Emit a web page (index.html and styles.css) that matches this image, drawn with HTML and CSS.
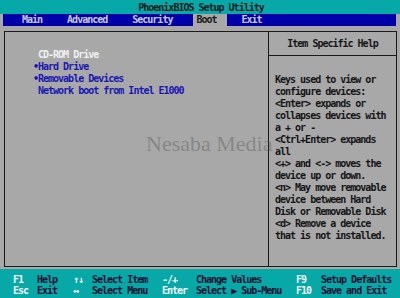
FILE: index.html
```html
<!DOCTYPE html>
<html>
<head>
<meta charset="utf-8">
<link rel="stylesheet" href="styles.css">
</head>
<body>
<div class="screen">
  <div class="titlebar">PhoenixBIOS Setup Utility</div>
  <nav class="menubar">
    <span class="tab tab-main">Main</span>
    <span class="tab tab-adv">Advanced</span>
    <span class="tab tab-sec">Security</span>
    <span class="tab tab-boot active">Boot</span>
    <span class="tab tab-exit">Exit</span>
  </nav>
  <main class="body">
    <div class="frame">
      <section class="list">
        <div class="item selected"><span class="mark"></span>CD-ROM Drive</div>
        <div class="item"><span class="mark">•</span>Hard Drive</div>
        <div class="item"><span class="mark">•</span>Removable Devices</div>
        <div class="item"><span class="mark"></span>Network boot from Intel E1000</div>
      </section>
      <aside class="help">
        <div class="help-head">Item Specific Help</div>
        <div class="help-text">
          <div>Keys used to view or</div>
          <div>configure devices:</div>
          <div>&lt;Enter&gt; expands or</div>
          <div>collapses devices with</div>
          <div>a + or -</div>
          <div>&lt;Ctrl+Enter&gt; expands</div>
          <div>all</div>
          <div>&lt;+&gt; and &lt;-&gt; moves the</div>
          <div>device up or down.</div>
          <div>&lt;n&gt; May move removable</div>
          <div>device between Hard</div>
          <div>Disk or Removable Disk</div>
          <div>&lt;d&gt; Remove a device</div>
          <div>that is not installed.</div>
        </div>
      </aside>
      <div class="watermark">Nesaba Media</div>
    </div>
  </main>
  <footer class="keys">
    <span class="k">F1</span><span class="d">Help</span><span class="k">↑↓</span><span class="d">Select Item</span><span class="k">-/+</span><span class="d">Change Values</span><span class="k">F9</span><span class="d">Setup Defaults</span>
    <span class="k">Esc</span><span class="d">Exit</span><span class="k">↔</span><span class="d">Select Menu</span><span class="k">Enter</span><span class="d">Select ▶ Sub-Menu</span><span class="k">F10</span><span class="d">Save and Exit</span>
  </footer>
</div>
</body>
</html>
```

FILE: styles.css
```css
html, body {
  margin: 0;
  padding: 0;
  background: #a8a8a8;
}
.screen {
  width: 400px;
  height: 298px;
  display: flex;
  flex-direction: column;
  font-family: "DejaVu Sans Mono", "Liberation Mono", monospace;
  font-size: 10px;
  font-weight: bold;
  letter-spacing: -1px;
  overflow: hidden;
}
.titlebar {
  height: 14px;
  line-height: 15px;
  background: #06a8a8;
  color: #0c1a1a;
  text-align: center;
  padding-left: 2px;
}
.menubar {
  height: 12px;
  margin: 0 4px 0 3px;
  background: #0000a8;
  display: flex;
  line-height: 12px;
}
.tab {
  color: #c8c8d8;
  height: 12px;
}
.tab-main { margin-left: 19px; }
.tab-adv { margin-left: 25px; }
.tab-sec { margin-left: 25px; }
.tab-boot { margin-left: 21px; padding: 0 10px 0 3px; }
.tab-exit { margin-left: 15px; }
.tab.active {
  background: #a8a8a8;
  color: #202020;
}
.body {
  flex: 1;
  padding: 5px 3px 2px 4px;
  background: #a8a8a8;
}
.frame {
  position: relative;
  height: 100%;
  box-sizing: border-box;
  border: 1px solid #1a1a1a;
  display: flex;
}
.list {
  width: 264px;
  border-right: 1px solid #1a1a1a;
  padding: 17px 0 0 28px;
  box-sizing: border-box;
}
.item {
  height: 12px;
  line-height: 12px;
  color: #1818b0;
  white-space: nowrap;
}
.item.selected { color: #f0f0f0; }
.mark {
  display: inline-block;
  width: 5px;
}
.help {
  flex: 1;
  display: flex;
  flex-direction: column;
}
.help-head {
  height: 23px;
  line-height: 24px;
  border-bottom: 1px solid #1a1a1a;
  text-align: center;
  color: #161616;
}
.help-text {
  padding: 18px 0 0 6px;
  color: #161616;
}
.help-text div {
  height: 12px;
  line-height: 12px;
  white-space: nowrap;
}
.watermark {
  position: absolute;
  z-index: 2;
  left: 141px;
  top: 99px;
  font-family: "Liberation Serif", serif;
  font-weight: normal;
  font-size: 22px;
  letter-spacing: 0;
  color: rgba(80, 80, 80, 0.4);
  pointer-events: none;
}
.keys {
  height: 29px;
  background: #06a8a8;
  display: grid;
  grid-template-columns: 24px 36px 19px 70px 34px 100px 25px auto;
  grid-auto-rows: 11px;
  align-content: center;
  padding: 2px 0 0 13px;
  box-sizing: border-box;
  line-height: 11px;
  white-space: nowrap;
}
.k { color: #f4f4f4; }
.d { color: #101030; }
```
